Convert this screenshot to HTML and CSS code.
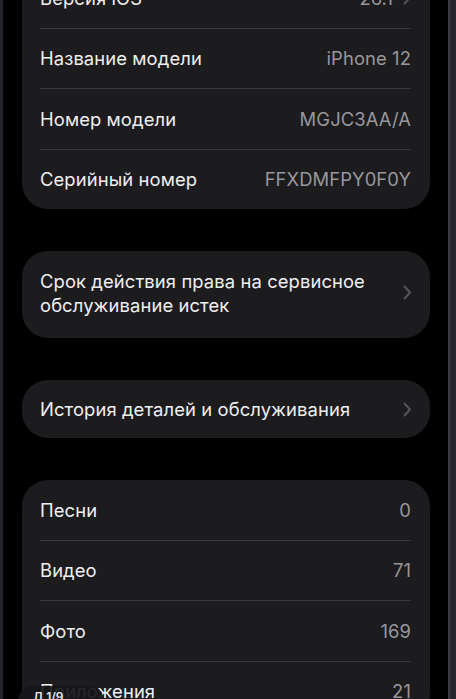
FILE: index.html
```html
<!DOCTYPE html>
<html lang="ru">
<head>
  <meta charset="UTF-8">
  <meta name="viewport" content="width=device-width, initial-scale=1.0">
  <title>Об этом устройстве</title>
  <link rel="stylesheet" href="styles.css">
</head>
<body>
  <main class="screen">
    <section class="card card-first">
      <div class="row">
        <span class="label">Версия iOS</span>
        <span class="value value-link">26.1
          <span class="chevron">
            <svg width="9" height="15" viewBox="0 0 9 15"><path d="M1.5 1.5 L7 7.5 L1.5 13.5" fill="none" stroke="currentColor" stroke-width="2" stroke-linecap="round" stroke-linejoin="round"/></svg>
          </span>
        </span>
      </div>
      <div class="row">
        <span class="label">Название модели</span>
        <span class="value">iPhone 12</span>
      </div>
      <div class="row">
        <span class="label">Номер модели</span>
        <span class="value">MGJC3AA/A</span>
      </div>
      <div class="row">
        <span class="label">Серийный номер</span>
        <span class="value">FFXDMFPY0F0Y</span>
      </div>
    </section>

    <section class="card">
      <div class="row row-link row-tall">
        <span class="label">Срок действия права на сервисное обслуживание истек</span>
        <span class="chevron">
          <svg width="9" height="15" viewBox="0 0 9 15"><path d="M1.5 1.5 L7 7.5 L1.5 13.5" fill="none" stroke="currentColor" stroke-width="2" stroke-linecap="round" stroke-linejoin="round"/></svg>
        </span>
      </div>
    </section>

    <section class="card">
      <div class="row row-link">
        <span class="label">История деталей и обслуживания</span>
        <span class="chevron">
          <svg width="9" height="15" viewBox="0 0 9 15"><path d="M1.5 1.5 L7 7.5 L1.5 13.5" fill="none" stroke="currentColor" stroke-width="2" stroke-linecap="round" stroke-linejoin="round"/></svg>
        </span>
      </div>
    </section>

    <section class="card">
      <div class="row">
        <span class="label">Песни</span>
        <span class="value">0</span>
      </div>
      <div class="row">
        <span class="label">Видео</span>
        <span class="value">71</span>
      </div>
      <div class="row">
        <span class="label">Фото</span>
        <span class="value">169</span>
      </div>
      <div class="row">
        <span class="label">Приложения</span>
        <span class="value">21</span>
      </div>
    </section>
  </main>

  <div class="page-pill">Д 1/9</div>
</body>
</html>
```

FILE: styles.css
```css
body {
  margin: 0;
  padding: 0;
  background-color: #26252b;
  font-family: 'Inter', 'Noto Sans', sans-serif;
  color: #efeff1;
  overflow: hidden;
  height: 699px;
}

.screen {
  margin: 0 6px 0 3px;
  padding: 0 18px 60px 19px;
  background-color: #000;
  border-right: 2px solid #3a3940;
  display: flex;
  flex-direction: column;
  gap: 42px;
  min-height: 699px;
  box-sizing: border-box;
}

.card {
  background-color: #1c1b1e;
  border-radius: 26px;
  padding: 0 19px 0 18px;
}

.card-first {
  margin-top: -32px;
}

.row {
  display: flex;
  justify-content: space-between;
  align-items: center;
  height: 59.5px;
  font-size: 18.4px;
  letter-spacing: 0.1px;
}

.row + .row {
  border-top: 1px solid #38373b;
}

.label {
  color: #efeff1;
}

.value {
  color: #98979c;
}

.value-link {
  display: flex;
  align-items: center;
  gap: 10px;
}

.row-link {
  height: 58px;
  gap: 20px;
}

.row-tall {
  height: 87px;
  line-height: 24px;
  padding-bottom: 4px;
  box-sizing: border-box;
}

.row-tall .label {
  max-width: 340px;
}

.chevron {
  color: #56555a;
  display: flex;
  align-items: center;
  margin-right: -1px;
}

.page-pill {
  position: absolute;
  left: 18px;
  top: 686px;
  width: 86px;
  height: 30px;
  border-radius: 15px;
  background-color: rgba(22, 22, 24, 0.92);
  color: #e6e6e8;
  font-size: 12px;
  font-weight: 600;
  padding: 3px 0 0 15px;
  box-sizing: border-box;
}
```
